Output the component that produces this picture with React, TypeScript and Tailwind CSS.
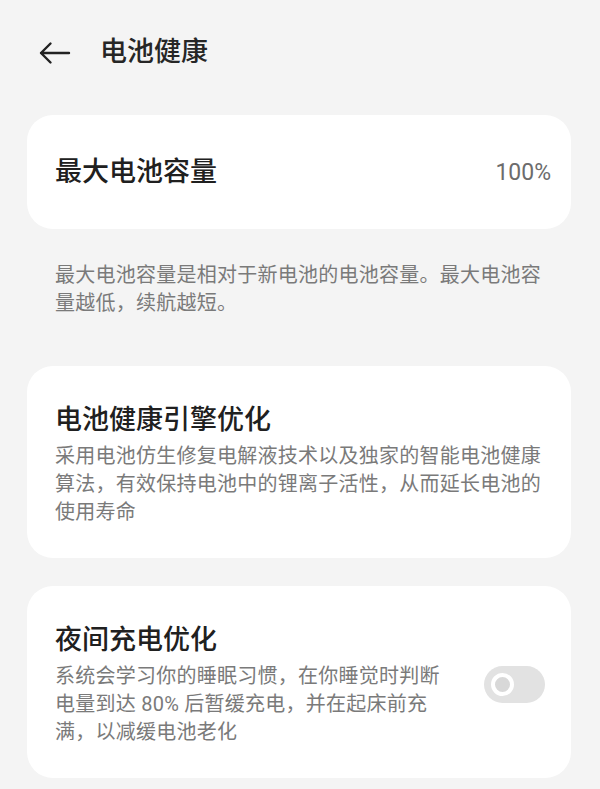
import React from "react";

const FONT = {
  fontFamily: '"Roboto", "Noto Sans CJK SC", "Noto Sans", sans-serif',
};

function BackArrow() {
  return (
    <svg width="32" height="24" viewBox="0 0 32 24" fill="none">
      <path
        d="M2 12H30M11.5 2.5L2 12L11.5 21.5"
        stroke="#222"
        strokeWidth="2.4"
        strokeLinecap="round"
        strokeLinejoin="round"
      />
    </svg>
  );
}

function Toggle() {
  return (
    <div className="flex h-[37px] w-[61px] shrink-0 items-center rounded-full bg-[#e2e2e2] pl-[7px]">
      <div className="h-[23px] w-[23px] rounded-full border-[4px] border-white bg-[#d8d8d8]" />
    </div>
  );
}

export default function App() {
  return (
    <div
      className="min-h-[789px] w-[600px] bg-[#f4f4f4] text-[#202020]"
      style={FONT}
    >
      {/* Header */}
      <header className="flex h-[105px] items-center pl-[39px]">
        <BackArrow />
        <h1 className="ml-[29px] text-[27px] font-medium leading-none text-[#262626]">
          电池健康
        </h1>
      </header>

      <div className="ml-[27px] mt-[10px] w-[544px]">
        {/* Max capacity */}
        <div className="flex h-[114px] items-center justify-between rounded-[26px] bg-white pl-[28px] pr-[20px]">
          <span className="text-[27px] font-medium leading-none">
            最大电池容量
          </span>
          <span className="text-[23px] leading-none text-[#6c6c6c]">100%</span>
        </div>
        <p className="mt-[32px] px-[28px] text-[20px] leading-[28px] tracking-[0.25px] text-[#7a7a7a]">
          最大电池容量是相对于新电池的电池容量。最大电池容量越低，续航越短。
        </p>

        {/* Engine optimisation */}
        <div className="mt-[49px] rounded-[26px] bg-white px-[28px] pb-[32px] pt-[36px]">
          <h2 className="text-[27px] font-medium leading-[36px]">
            电池健康引擎优化
          </h2>
          <p className="mt-[4px] text-[20px] leading-[28px] tracking-[0.25px] text-[#7a7a7a]">
            采用电池仿生修复电解液技术以及独家的智能电池健康算法，有效保持电池中的锂离子活性，从而延长电池的使用寿命
          </p>
        </div>

        {/* Night charging */}
        <div className="mt-[28px] flex items-center justify-between rounded-[26px] bg-white pb-[32px] pl-[28px] pr-[26px] pt-[36px]">
          <div className="w-[386px]">
            <h2 className="text-[27px] font-medium leading-[36px]">
              夜间充电优化
            </h2>
            <p className="mt-[4px] text-[20px] leading-[28px] tracking-[0.25px] text-[#7a7a7a]">
              系统会学习你的睡眠习惯，在你睡觉时判断电量到达 80% 后暂缓充电，并在起床前充满，以减缓电池老化
            </p>
          </div>
          <Toggle />
        </div>
      </div>
    </div>
  );
}
